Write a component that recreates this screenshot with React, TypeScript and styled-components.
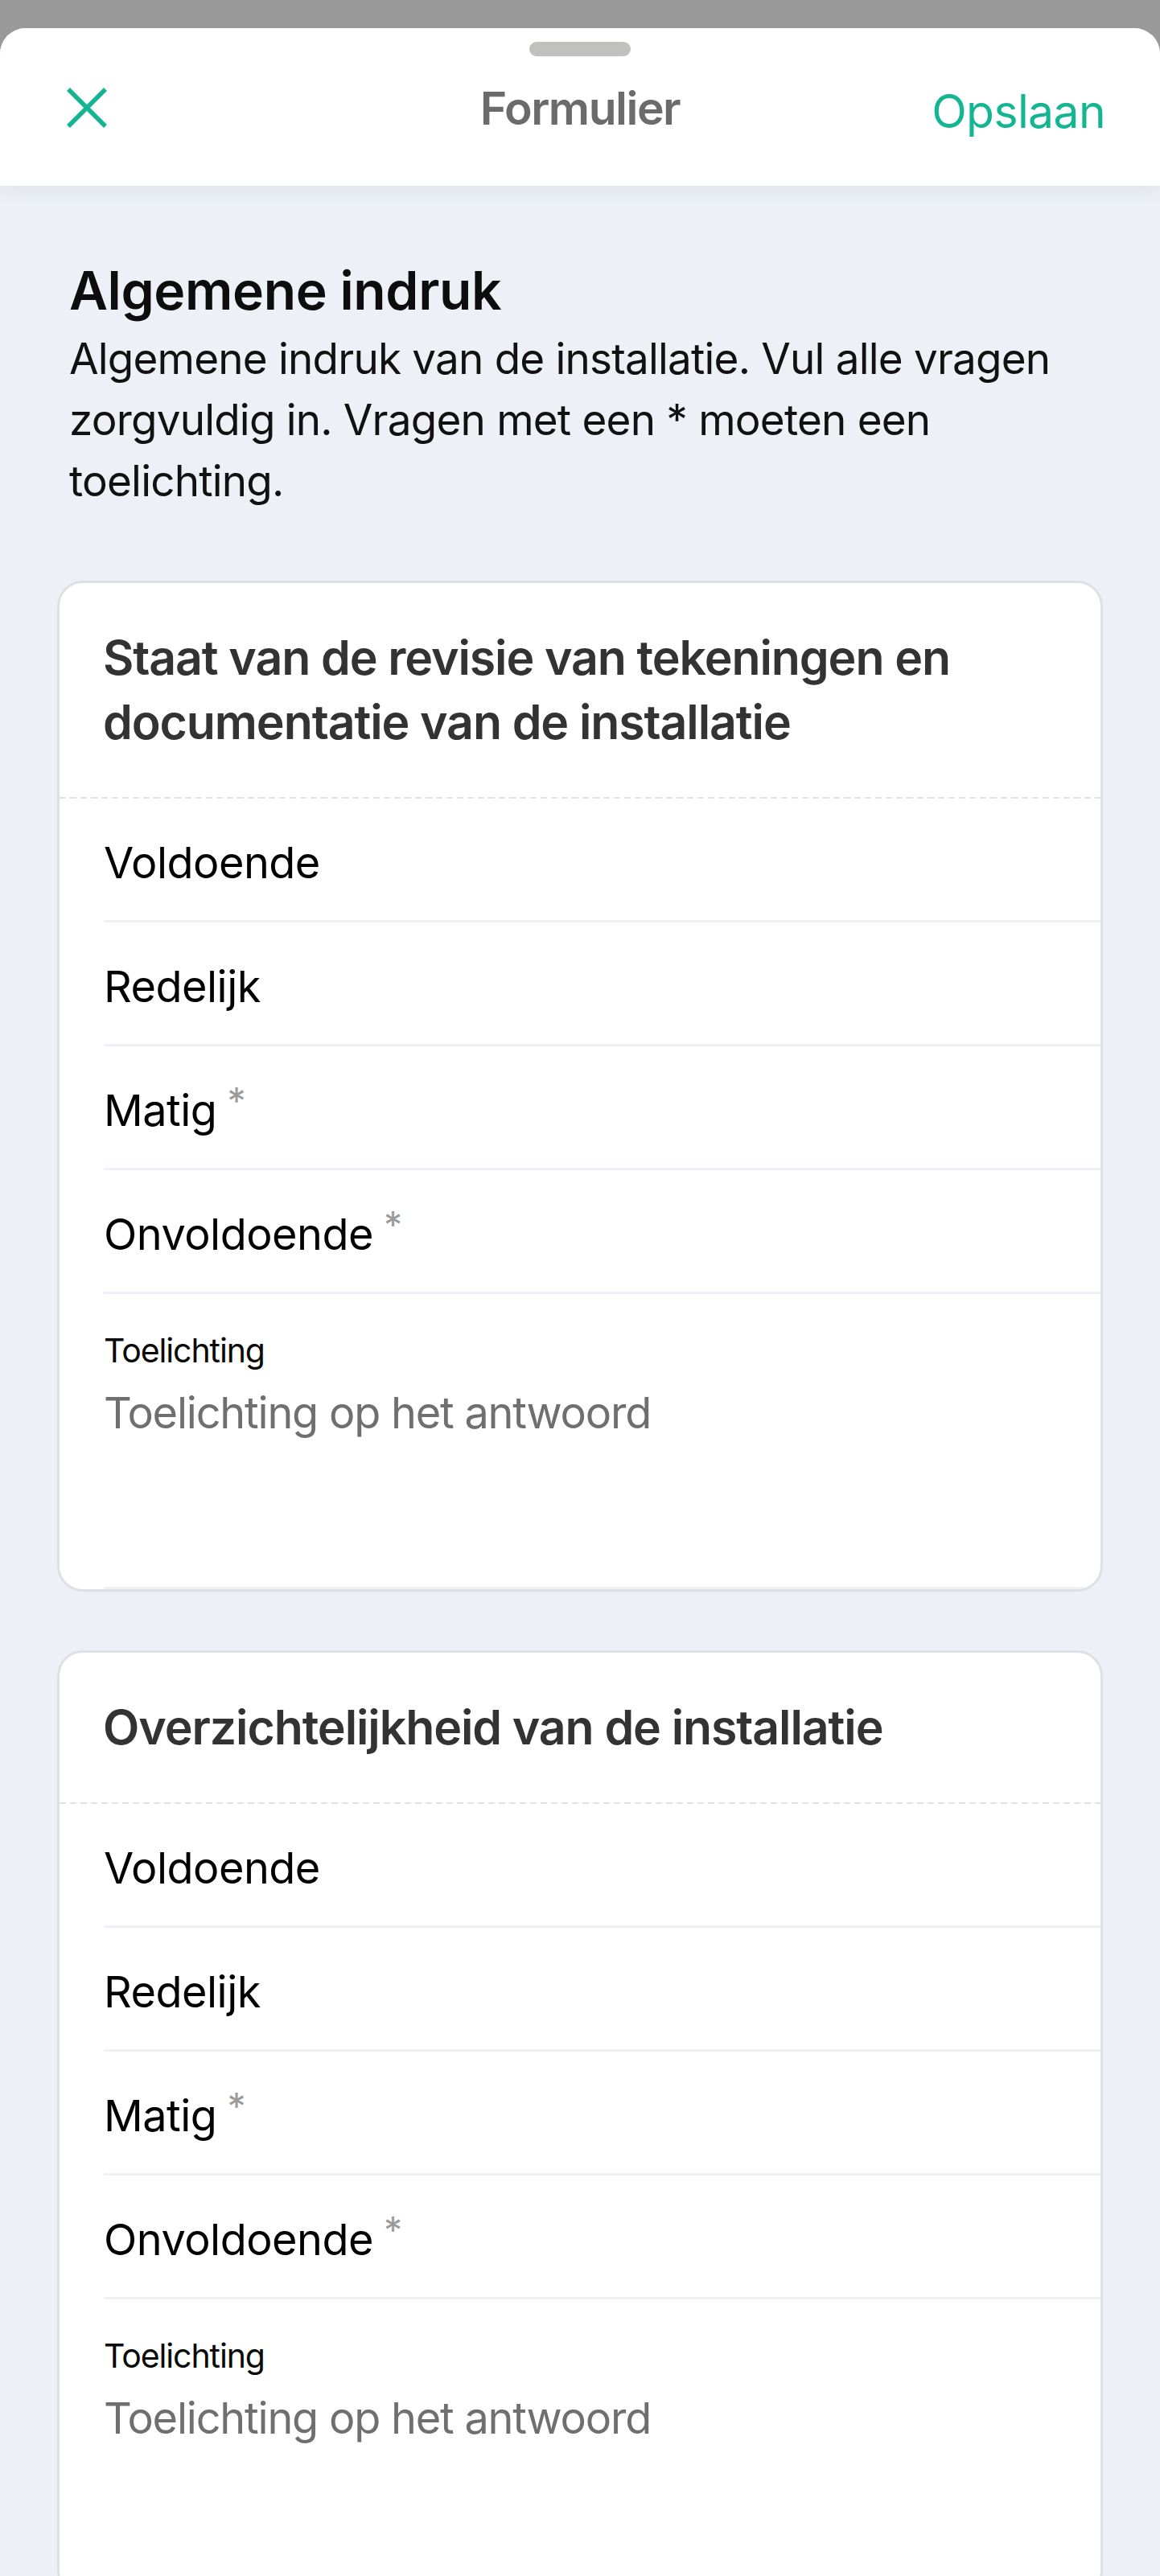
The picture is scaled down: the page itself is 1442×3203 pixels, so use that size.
import React from "react";
import styled, { createGlobalStyle } from "styled-components";

const GlobalStyle = createGlobalStyle`
  html, body {
    margin: 0;
    padding: 0;
    background: #999999;
  }
  * { box-sizing: border-box; }
  body {
    font-family: Inter, "Noto Sans", "Liberation Sans", sans-serif;
  }
`;

const Screen = styled.div`
  height: 3203px;
  overflow: hidden;
  background: #999999;
  padding-top: 35px;
  display: flex;
  flex-direction: column;
`;

const Sheet = styled.div`
  flex: 1;
  display: flex;
  flex-direction: column;
  background: #edf0f7;
  border-radius: 32px 32px 0 0;
  overflow: hidden;
`;

const TopBar = styled.header`
  position: relative;
  z-index: 1;
  background: #ffffff;
  padding-bottom: 33px;
  box-shadow: 0 6px 22px rgba(40, 50, 90, 0.07);
  display: flex;
  flex-direction: column;
  align-items: center;
`;

const Handle = styled.div`
  width: 126px;
  height: 18px;
  margin-top: 17px;
  border-radius: 9px;
  background: #c0c0bf;
`;

const NavRow = styled.div`
  width: 100%;
  height: 128px;
  display: grid;
  grid-template-columns: 1fr auto 1fr;
  align-items: center;
  padding: 0 68px;
`;

const CloseButton = styled.button`
  justify-self: start;
  margin-left: 15px;
  width: 50px;
  height: 50px;
  padding: 0;
  border: none;
  background: none;
  display: flex;
  align-items: center;
  justify-content: center;
`;

const Title = styled.h1`
  margin: 0;
  font-size: 57px;
  font-weight: 600;
  color: #6b6b6b;
  letter-spacing: -1.5px;
`;

const SaveButton = styled.button`
  justify-self: end;
  padding: 8px 0 0;
  border: none;
  background: none;
  font-family: inherit;
  font-size: 57px;
  font-weight: 400;
  letter-spacing: -0.6px;
  color: #13b592;
`;

const Content = styled.main`
  padding: 90px 71px 0;
  display: flex;
  flex-direction: column;
`;

const Intro = styled.section`
  padding: 0 15px;
  margin-bottom: 86px;
`;

const IntroHeading = styled.h2`
  margin: 0;
  font-size: 66px;
  line-height: 80px;
  font-weight: 600;
  color: #0d0d0d;
  letter-spacing: -0.4px;
`;

const IntroText = styled.p`
  margin: 7px 0 0;
  font-size: 53px;
  line-height: 76px;
  font-weight: 400;
  letter-spacing: -0.8px;
  color: #111111;
`;

const Card = styled.section`
  background: #ffffff;
  border: 3px solid #dee0e5;
  border-radius: 32px;
  margin-bottom: 73px;
  overflow: hidden;
`;

const CardTitle = styled.h3`
  margin: 0;
  padding: 53px 54px;
  font-size: 59px;
  line-height: 80px;
  font-weight: 600;
  color: #333333;
  letter-spacing: -1.1px;
`;

const DashedRule = styled.div`
  height: 2px;
  background-image: repeating-linear-gradient(
    to right,
    #e1e1e1 0,
    #e1e1e1 8px,
    transparent 8px,
    transparent 13px
  );
`;

const OptionList = styled.div`
  display: flex;
  flex-direction: column;
`;

const OptionRow = styled.button`
  margin-left: 55px;
  height: 143px;
  padding: 8px 0 0;
  border: none;
  border-bottom: 3px solid #eef1f6;
  background: none;
  text-align: left;
  display: flex;
  align-items: center;
  font-family: inherit;
  font-size: 54px;
  font-weight: 400;
  letter-spacing: -0.5px;
  color: #000000;
  box-sizing: content-box;
`;

const Required = styled.span`
  margin-left: 13px;
  font-size: 46px;
  color: #9a9a9a;
  vertical-align: 0.3em;
  line-height: 0;
`;

const NoteField = styled.label`
  margin-left: 55px;
  padding-top: 45px;
  border-bottom: 3px solid #eef1f6;
  display: flex;
  flex-direction: column;
  gap: 19px;
`;

const NoteLabel = styled.span`
  font-size: 41px;
  line-height: 51px;
  letter-spacing: -1.1px;
  color: #0a0a0a;
`;

const NoteInput = styled.textarea`
  height: 249px;
  width: 100%;
  padding: 0;
  border: none;
  outline: none;
  resize: none;
  background: transparent;
  font-family: inherit;
  font-size: 54px;
  line-height: 66px;
  letter-spacing: -1.2px;
  color: #222222;
  &::placeholder {
    color: #6f6f6f;
  }
`;

const CloseIcon = () => (
  <svg width="50" height="50" viewBox="0 0 50 50" aria-hidden="true">
    <line x1="2" y1="2" x2="48" y2="48" stroke="#13b592" strokeWidth="5.5" />
    <line x1="48" y1="2" x2="2" y2="48" stroke="#13b592" strokeWidth="5.5" />
  </svg>
);

type Option = { label: string; required?: boolean };

const options: Option[] = [
  { label: "Voldoende" },
  { label: "Redelijk" },
  { label: "Matig", required: true },
  { label: "Onvoldoende", required: true },
];

const questions = [
  "Staat van de revisie van tekeningen en documentatie van de installatie",
  "Overzichtelijkheid van de installatie",
];

const QuestionCard = ({ title }: { title: string }) => (
  <Card>
    <CardTitle>{title}</CardTitle>
    <DashedRule />
    <OptionList>
      {options.map((o) => (
        <OptionRow key={o.label} type="button">
          <span>
            {o.label}
            {o.required && <Required>*</Required>}
          </span>
        </OptionRow>
      ))}
      <NoteField>
        <NoteLabel>Toelichting</NoteLabel>
        <NoteInput placeholder="Toelichting op het antwoord" />
      </NoteField>
    </OptionList>
  </Card>
);

export default function App() {
  return (
    <>
      <GlobalStyle />
      <Screen>
        <Sheet>
          <TopBar>
            <Handle />
            <NavRow>
              <CloseButton type="button" aria-label="Sluiten">
                <CloseIcon />
              </CloseButton>
              <Title>Formulier</Title>
              <SaveButton type="button">Opslaan</SaveButton>
            </NavRow>
          </TopBar>
          <Content>
            <Intro>
              <IntroHeading>Algemene indruk</IntroHeading>
              <IntroText>
                Algemene indruk van de installatie. Vul alle vragen zorgvuldig
                in. Vragen met een * moeten een toelichting.
              </IntroText>
            </Intro>
            {questions.map((q) => (
              <QuestionCard key={q} title={q} />
            ))}
          </Content>
        </Sheet>
      </Screen>
    </>
  );
}
